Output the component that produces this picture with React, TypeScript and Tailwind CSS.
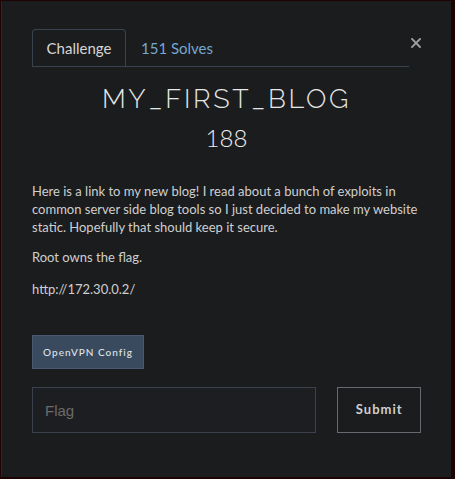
import * as React from "react";

const lato = "font-['Lato','Open_Sans',sans-serif]";

function CloseIcon() {
  return (
    <svg aria-hidden="true" className="size-[10px]" viewBox="0 0 10 10">
      <path
        d="M1 1 L9 9 M9 1 L1 9"
        stroke="#9c9ea1"
        strokeLinecap="square"
        strokeWidth="1.9"
      />
    </svg>
  );
}

export default function App() {
  return (
    <div className="h-[479px] w-[455px] overflow-hidden bg-[#1e0303] pl-px pt-px">
      <div
        className={`h-[476px] w-[450px] border-l border-[#26282b] bg-[#1b1c1e] px-[30px] pt-[29px] ${lato}`}
      >
        <div className="flex items-start">
          <div className="flex h-[37px] w-[378px] items-end border-b border-[#3a4350]">
            <div className="flex h-[37px] w-[94px] items-center justify-center rounded-t-[4px] border border-b-0 border-[#3a4350] bg-[#1b1c1e] pt-px text-[15px] text-[#d6d6d6]">
              Challenge
            </div>
            <div className="flex h-[37px] items-center pl-[15px] pt-px text-[15px] text-[#74a7d2]">
              151 Solves
            </div>
          </div>
          <button className="ml-[1px] mt-[7px] flex size-[11px] items-center justify-center">
            <CloseIcon />
          </button>
        </div>

        <h1 className="mt-[16px] text-center font-['Raleway','Lato',sans-serif] text-[27px] font-light leading-[32px] tracking-[2.7px] text-[#e6e6e6]">
          MY_FIRST_BLOG
        </h1>
        <p className="mt-[8px] text-center text-[24px] font-light leading-[30px] text-[#ececec]">
          188
        </p>

        <div className="mt-[29px] text-[13px] leading-[18px] text-[#cfcfcf]">
          <p>
            Here is a link to my new blog! I read about a bunch of exploits in
            common server side blog tools so I just decided to make my website
            static. Hopefully that should keep it secure.
          </p>
          <p className="mt-[12px]">Root owns the flag.</p>
          <p className="mt-[14px]">http://172.30.0.2/</p>
        </div>

        <button className="mt-[37px] flex h-[34px] w-[112px] items-center justify-center border border-[#4a5970] bg-[#3a4a5e] text-[10px] font-medium tracking-[1px] text-[#dfe3e8]">
          OpenVPN Config
        </button>

        <div className="mt-[18px] flex items-center gap-[21px]">
          <input
            className="h-[46px] w-[286px] border border-[#3a414c] bg-[#1d1e21] px-[12px] font-['Liberation_Sans',sans-serif] text-[15px] text-[#ccc] outline-none placeholder:text-[#6b6b6b]"
            placeholder="Flag"
          />
          <button className="flex h-[46px] w-[84px] items-center justify-center border border-[#666a70] text-[13px] font-bold tracking-[1px] text-[#cfcfcf]">
            Submit
          </button>
        </div>
      </div>
    </div>
  );
}
